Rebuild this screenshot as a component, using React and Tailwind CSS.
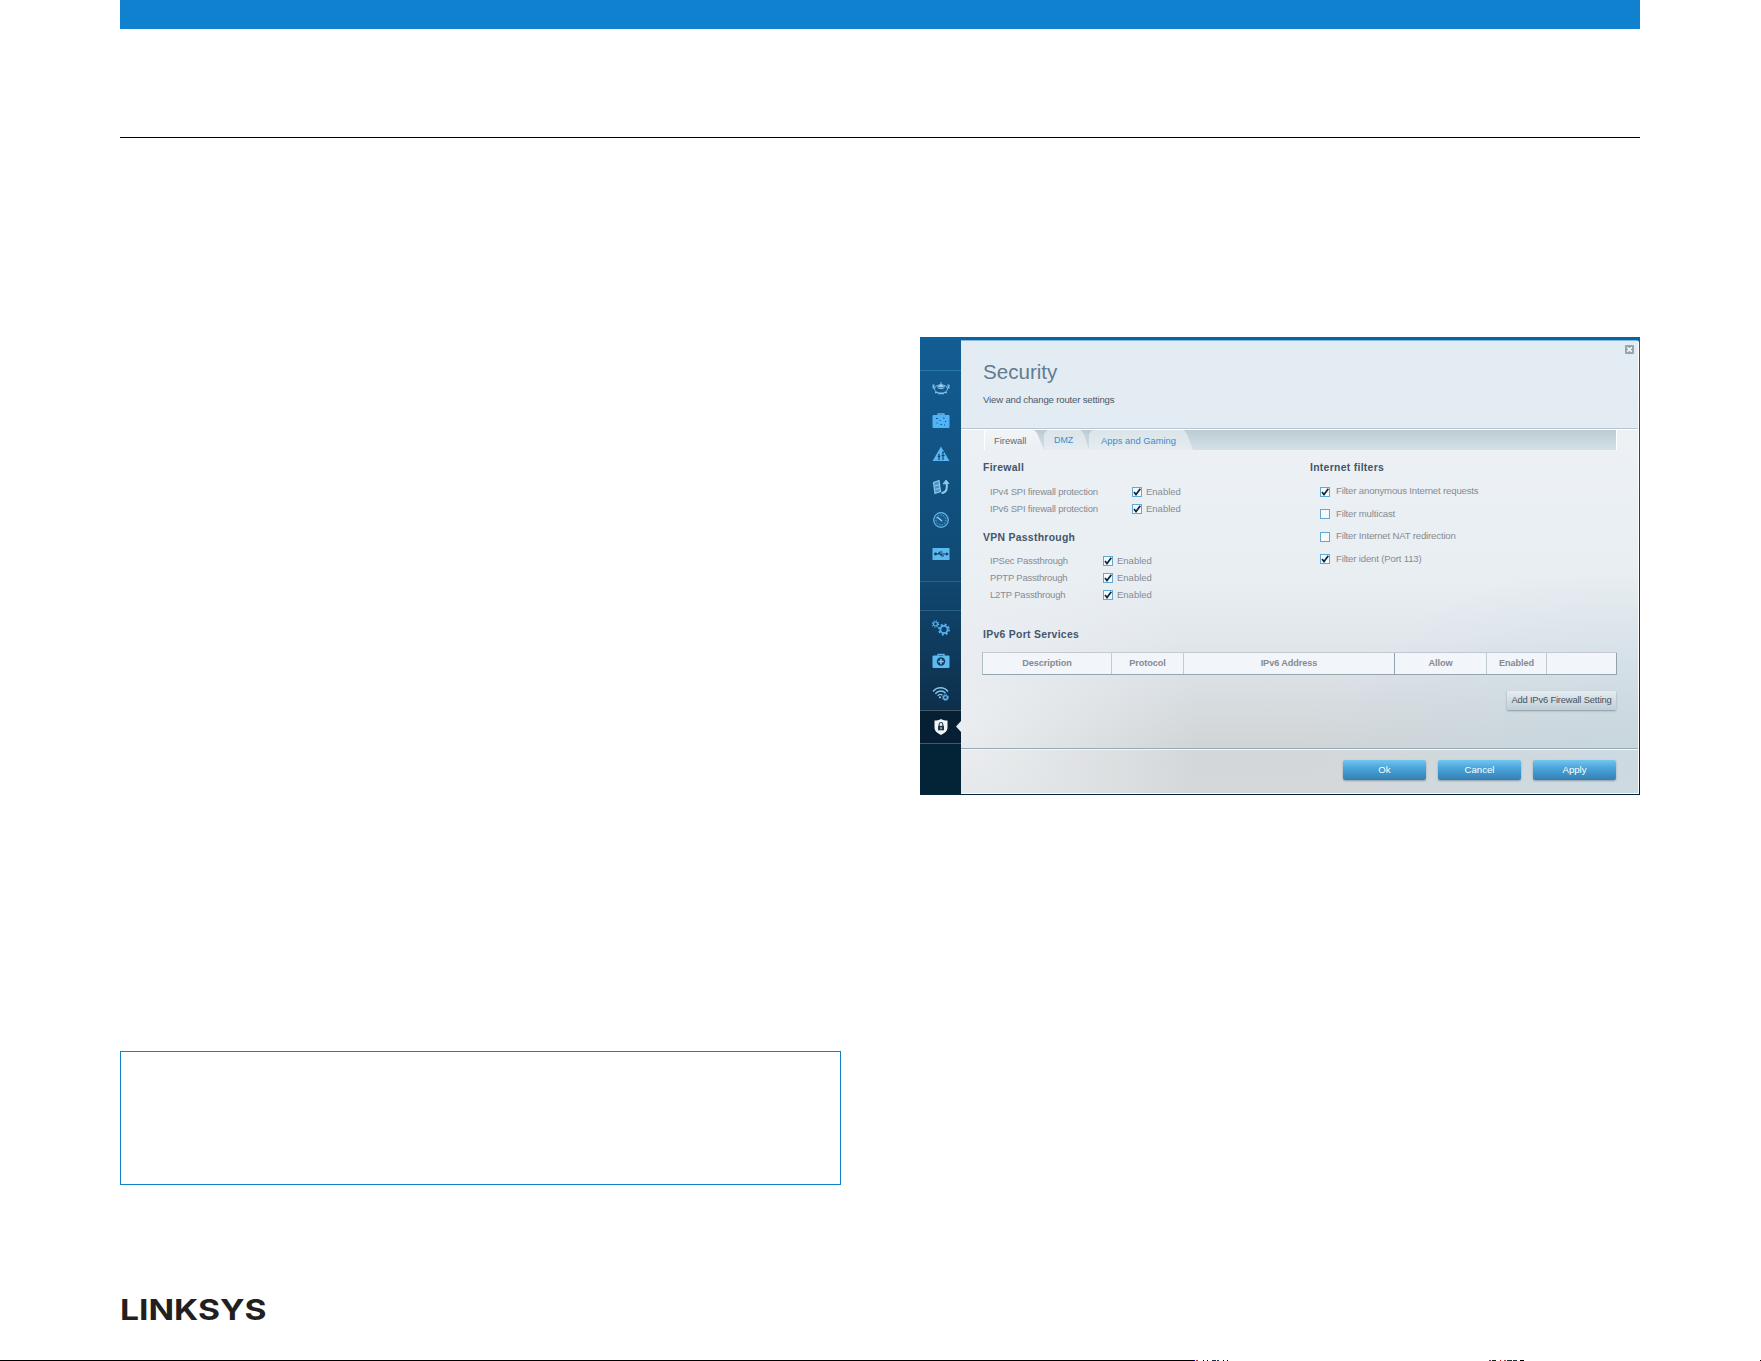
import React from 'react';
import clsx from 'clsx';

const icons = {
  devices: (
    <g fill="none" stroke="#7fbce6" strokeWidth="1">
      <ellipse cx="9" cy="10" rx="6.5" ry="4.2" />
      <path d="M5.500 8L9 5l3.500 3z" fill="#a9d8f5" />
      <path d="M6.500 9.500h5M9 3v2" />
      <path d="M1.500 5.500v4M16.500 5.500v4" strokeWidth="2" />
      <path d="M3 13.500h2.500M12.500 13.500H15M6 14.500h6" strokeWidth="1.600" />
    </g>
  ),
  guest: (
    <g>
      <path d="M6 4V2h6v2" fill="none" stroke="#5cb8f5" strokeWidth="1.300" />
      <rect x=".5" y="3" width="17" height="13" rx="1" fill="#4fb3f5" />
      <path d="M4 6.500h2M11 6h1.500M7.500 8.500h1M4.500 11h1M8.500 12.500h1.500M13 9.500h1M12 13h1" stroke="#12527f" strokeWidth="1.200" />
    </g>
  ),
  parental: (
    <g>
      <path d="M9 1.500L17.500 16H.5z" fill="#5ab6f1" />
      <path d="M7 10v5M5.800 11.500h2.500M11 8.500V15M9.500 10.500h3.200" stroke="#0e4a76" strokeWidth="1.200" />
      <circle cx="11" cy="7.500" r="1" fill="#0e4a76" />
      <circle cx="7" cy="9.500" r=".8" fill="#0e4a76" />
    </g>
  ),
  media: (
    <g fill="none" stroke="#8ec9ee" strokeWidth="1.200">
      <path d="M1.500 4.500l5.500-2 1.500 11L3 15.500z" fill="#4f93c3" />
      <path d="M3 8l4-1.300M3.500 11.500l4-1.300" />
      <path d="M9.500 15c5.500-.5 6-5 5-11" strokeWidth="2" />
      <path d="M11 6l3-4 3 3.500z" fill="#8ec9ee" strokeWidth=".8" />
    </g>
  ),
  speed: (
    <g fill="none" stroke="#65b3e5">
      <circle cx="9" cy="9" r="7.300" fill="#185d8e" strokeWidth="1.200" />
      <circle cx="9" cy="9" r="5" strokeDasharray="1.200 1.600" />
      <path d="M5 6l5 4" stroke="#9ed5f6" strokeWidth="1.200" />
    </g>
  ),
  usb: (
    <g>
      <rect x=".5" y="3" width="17" height="12" fill="#5cb9ef" />
      <path d="M2.500 9h13M6 9l2-2h2.500M8 9l2 2h2" stroke="#0d4165" strokeWidth="1.100" fill="none" />
      <path d="M14 7.200l3 1.800-3 1.800z" fill="#0d4165" />
      <circle cx="3.500" cy="9" r="1.400" fill="#0d4165" />
    </g>
  ),
  settings: (
    <g fill="none" stroke="#56b2ee">
      <circle cx="12" cy="10.500" r="3.600" strokeWidth="1.800" />
      <circle cx="12" cy="10.500" r="5.100" strokeWidth="1.700" strokeDasharray="2 2.005" />
      <circle cx="3.500" cy="5" r="2" strokeWidth="1.200" />
      <circle cx="3.500" cy="5" r="3.100" strokeWidth="1.200" strokeDasharray="1.217 1.217" />
    </g>
  ),
  trouble: (
    <g>
      <path d="M6 4V2.300h6V4" fill="none" stroke="#5ab6ee" strokeWidth="1.300" />
      <rect x=".5" y="3.500" width="17" height="12.500" rx="1" fill="#5fbaf0" />
      <circle cx="9" cy="9.500" r="4.200" fill="#123f60" />
      <path d="M9 6.800v5.400M6.300 9.500h5.400" stroke="#7cc8f4" strokeWidth="1.500" />
    </g>
  ),
  wireless: (
    <g fill="none" stroke="#86c2ea" strokeWidth="1.400">
      <path d="M1 6.500c4-5 11-5 15 0M3.300 8.700c3-3.500 7.500-3.500 10.300-.5M5.600 10.800c1.500-1.600 3.500-1.700 5-.6" />
      <circle cx="8" cy="12.300" r="1.100" fill="#86c2ea" stroke="none" />
      <circle cx="13.500" cy="12.500" r="1.900" stroke="#65b4e9" />
      <circle cx="13.500" cy="12.500" r="3" stroke="#65b4e9" strokeWidth="1" strokeDasharray="1.178 1.178" />
    </g>
  ),
  security: (
    <g>
      <path d="M9 1c2 1.200 4.200 1.500 6.500 1.500V9.500c0 3.500-3 5.800-6.500 7.500-3.500-1.700-6.500-4-6.500-7.500V2.500C4.800 2.500 7 2.200 9 1z" fill="#f1f5f8" />
      <rect x="6" y="7.800" width="6" height="4.500" fill="#213848" />
      <path d="M7.200 8V6.300a1.800 1.800 0 0 1 3.600 0V8" fill="none" stroke="#213848" strokeWidth="1.100" />
      <path d="M9 9.200v2" stroke="#f1f5f8" />
    </g>
  ),
};

const Icon = ({ name }) => (
  <svg className="h-[18px] w-[18px]" viewBox="0 0 18 18">{icons[name]}</svg>
);

const SideItem = ({ name }) => (
  <div className="flex h-[33.2px] items-center justify-center">
    <Icon name={name} />
  </div>
);

const Sidebar = () => (
  <div className="flex w-[41px] shrink-0 flex-col bg-linear-to-b from-[#125d93] via-[#104a74] via-50% to-[#0a2135]">
    <div className="h-[31px] shrink-0 border-b border-[#2a75a8]" />
    <div className="h-[210px] shrink-0">
      {['devices', 'guest', 'parental', 'media', 'speed', 'usb'].map((n) => (
        <SideItem key={n} name={n} />
      ))}
    </div>
    <div className="h-[30px] shrink-0 border-y border-[#2b5f85]" />
    <div className="h-[99px] shrink-0">
      {['settings', 'trouble', 'wireless'].map((n) => (
        <SideItem key={n} name={n} />
      ))}
    </div>
    <div className="relative flex h-[34px] shrink-0 items-center justify-center border-y border-[#40596b] bg-[#061f32]">
      <Icon name="security" />
      <span className="absolute right-0 top-[10px] h-[11px] w-[5px] bg-[#e8edf1] [clip-path:polygon(100%_0,0_50%,100%_100%)]" />
    </div>
    <div className="grow bg-[#032337]" />
  </div>
);

const Box = ({ checked }) => (
  <span className="flex h-[10px] w-[10px] shrink-0 border border-[#64a8d2] bg-[#f6fafc]">
    {checked && (
      <svg className="h-2 w-2" viewBox="0 0 8 8">
        <path d="M1 4l2 2.500L7.300.8" fill="none" stroke="#0b2941" strokeWidth="1.700" />
      </svg>
    )}
  </span>
);

const Heading = ({ children, className }) => (
  <h2 className={clsx('whitespace-nowrap text-[10.4px] leading-[14px] font-bold tracking-[0.3px] text-[#44566a]', className)}>
    {children}
  </h2>
);

const Setting = ({ label, labelWidth, height }) => (
  <div className={clsx('flex items-center pl-[7px] text-[9.5px] text-[#868c93]', height)}>
    <span className={clsx('tracking-[-0.2px]', labelWidth)}>{label}</span>
    <Box checked />
    <span className="ml-1">Enabled</span>
  </div>
);

const Filter = ({ label, checked }) => (
  <div className="flex h-[22.5px] items-center gap-[6px] whitespace-nowrap pl-[10px] text-[9.6px] tracking-[-0.17px] text-[#868c93]">
    <Box checked={checked} />
    <span>{label}</span>
  </div>
);

const ActionButton = ({ children }) => (
  <button className="h-5 w-[83px] rounded-[2px] bg-linear-to-b from-[#73c5ef] via-[#4aa5db] via-40% to-[#347fb4] text-[9.6px] text-white shadow-[0_1px_2px_#8b9ba6]">
    {children}
  </button>
);

const Tabs = () => (
  <div className="ml-[23px] flex h-[20px] w-[633px] border-r border-white bg-linear-to-b from-[#bccbd3] to-[#d5e0e7] text-[9.4px] text-[#3b8cca]">
    <div className="w-[60px] border-l border-white bg-linear-to-b from-[#f2f5f8] to-[#ebf0f4] pl-[9px] leading-[21px] text-[#5d6975] [clip-path:polygon(0_0,50px_0,53px_3px,60px_100%,0_100%)]">
      Firewall
    </div>
    <div className="w-[45px] bg-linear-to-b from-[#dae4e9] to-[#e6edf1] pl-[10px] text-[8.9px] leading-[21px] [clip-path:polygon(0_4px,3px_0,37px_0,40px_4px,45px_100%,0_100%)]">
      DMZ
    </div>
    <div className="w-[104px] whitespace-nowrap bg-linear-to-b from-[#dae4e9] to-[#e6edf1] pl-[12px] leading-[21px] [clip-path:polygon(0_4px,3px_0,95px_0,98px_4px,104px_100%,0_100%)]">
      Apps and Gaming
    </div>
  </div>
);

const columns = [
  { label: 'Description', width: 'w-[129px]' },
  { label: 'Protocol', width: 'w-[72px]' },
  { label: 'IPv6 Address', width: 'w-[211px]', dark: true },
  { label: 'Allow', width: 'w-[92px]' },
  { label: 'Enabled', width: 'w-[60px]' },
  { label: '', width: 'w-[70px]', dark: true },
];

const RouterWindow = () => (
  <section className="flex h-[458px] w-[720px] border-b border-[#04263d] bg-linear-to-b from-[#0863a5] to-[#04263d]">
    <div className="flex grow pt-[3px]">
      <Sidebar />
      <div className="mr-px flex grow flex-col rounded-tr-[3px] border-t border-r border-b border-t-[#86bddf] border-r-white border-b-white bg-[radial-gradient(ellipse_35%_55%_at_0%_85%,rgba(240,243,246,0.8),rgba(240,243,246,0)),radial-gradient(ellipse_50%_45%_at_100%_95%,rgba(192,216,227,0.6),rgba(192,216,227,0)),linear-gradient(to_bottom,#edf1f5_20%,#e8eef2_52%,#e2e7ed_66%,#d7dce0_80%,#cfd3d5_92%,#d0d4d6)]">
        <header className="relative h-[88px] shrink-0 border-b border-[#b9c6cf] bg-[#e3ebf3] pl-[22px] pt-[18px]">
          <h1 className="text-[20.6px] leading-[26px] text-[#637b8e]">Security</h1>
          <p className="mt-[9px] text-[9.6px] leading-[12px] tracking-[-0.18px] text-[#4f5964]">View and change router settings</p>
          <span className="absolute right-[4px] top-[4px] h-[9px] w-[9px] rounded-[1px] bg-[#93a5b2]">
            <svg className="h-[9px] w-[9px]" viewBox="0 0 9 9">
              <path d="M2.200 2.200l4.600 4.600M6.800 2.200L2.200 6.800" stroke="#fff" strokeWidth="1.500" />
            </svg>
          </span>
        </header>
        <div className="h-[320px] shrink-0 border-t border-b border-t-white border-b-[#9aaab4]">
          <Tabs />
          <div className="flex h-[175px] pl-[22px] pt-[11px]">
            <div className="w-[327px]">
              <Heading>Firewall</Heading>
              <div className="mt-[8.5px]">
                <Setting label="IPv4 SPI firewall protection" labelWidth="w-[142px]" height="h-[17px]" />
                <Setting label="IPv6 SPI firewall protection" labelWidth="w-[142px]" height="h-[17px]" />
              </div>
              <Heading className="mt-[13px]">VPN Passthrough</Heading>
              <div className="mt-[7.500px]">
                <Setting label="IPSec Passthrough" labelWidth="w-[113px]" height="h-[17.4px]" />
                <Setting label="PPTP Passthrough" labelWidth="w-[113px]" height="h-[17.4px]" />
                <Setting label="L2TP Passthrough" labelWidth="w-[113px]" height="h-[17.4px]" />
              </div>
            </div>
            <div>
              <Heading>Internet filters</Heading>
              <div className="mt-[5.4px]">
                <Filter label="Filter anonymous Internet requests" checked />
                <Filter label="Filter multicast" />
                <Filter label="Filter Internet NAT redirection" />
                <Filter label="Filter ident (Port 113)" checked />
              </div>
            </div>
          </div>
          <div className="pl-[21px] pr-[21px]">
            <Heading className="ml-px pt-[3px]">IPv6 Port Services</Heading>
            <div className="mt-[10px] flex h-[23px] w-[635px] border-y border-l border-t-[#c1cad1] border-b-[#94a5ae] border-l-[#b4c0c8] bg-[#f2f5fa] text-[9.200px] font-bold leading-[21px] tracking-[-0.1px] text-[#868b92]">
              {columns.map((c, i) => (
                <div
                  key={i}
                  className={clsx('border-r text-center', c.width, c.dark ? 'border-[#91a2ad]' : 'border-[#c1cbd2]')}
                >
                  {c.label}
                </div>
              ))}
            </div>
            <div className="mr-px flex justify-end pt-[16px]">
              <button className="h-[19px] w-[109px] whitespace-nowrap rounded-[1px] bg-linear-to-b from-[#e6edf1] to-[#bfced7] text-[9.400px] tracking-[-0.18px] text-[#46525e] shadow-[0_1px_2px_#8998a2]">
                Add IPv6 Firewall Setting
              </button>
            </div>
          </div>
        </div>
        <footer className="flex grow justify-end gap-[12px] border-t border-[#f3f6f7] bg-white/10 pr-[22px] pt-[10px]">
          <ActionButton>Ok</ActionButton>
          <ActionButton>Cancel</ActionButton>
          <ActionButton>Apply</ActionButton>
        </footer>
      </div>
    </div>
  </section>
);

// leftover printer marks along the page bottom: [offset, width, colour]
const marks = [
  ['ml-0', 'w-[1194px]', 'bg-black'],
  ['ml-0', 'w-px', 'bg-[#0000ff]'],
  ['ml-px', 'w-[2px]', 'bg-[#c33220]'],
  ['ml-[5px]', 'w-px', 'bg-black'],
  ['ml-[3px]', 'w-px', 'bg-black'],
  ['ml-[4px]', 'w-[4px]', 'bg-[#1b2f55]'],
  ['ml-px', 'w-[2px]', 'bg-[#143a6a]'],
  ['ml-[4px]', 'w-px', 'bg-black'],
  ['ml-[3px]', 'w-px', 'bg-black'],
  ['ml-[261px]', 'w-[2px]', 'bg-[#7b2f7b]'],
  ['ml-px', 'w-[4px]', 'bg-[#0b2b12]'],
  ['ml-[4px]', 'w-px', 'bg-[#ff0000]'],
  ['ml-[3px]', 'w-[2px]', 'bg-[#c34040]'],
  ['ml-px', 'w-[5px]', 'bg-[#123535]'],
  ['ml-px', 'w-[4px]', 'bg-[#222f3f]'],
  ['ml-[3px]', 'w-[4px]', 'bg-black'],
  ['ml-auto', 'w-px', 'bg-black'],
];

const App = () => (
  <div className="flex h-[1361px] w-[1761px] flex-col overflow-hidden bg-white font-['Liberation_Sans',Arial,sans-serif]">
    <div className="ml-[120px] h-[29px] w-[1520px] shrink-0 bg-[#1081cf]" />
    <div className="ml-[120px] mt-[108px] h-px w-[1520px] shrink-0 bg-black" />
    <main className="ml-[120px] flex h-[1047px] w-[1520px] shrink-0 justify-between">
      <div className="flex w-[721px] items-end">
        <div className="h-[134px] w-full border border-[#1081c8]" />
      </div>
      <div className="pt-[199px]">
        <RouterWindow />
      </div>
    </main>
    <div className="ml-[120px] mt-[104px] h-[44px]">
      <svg className="overflow-visible" width="150" height="44" viewBox="0 0 150 44">
        <text x="0" y="31" textLength="146.500" lengthAdjust="spacingAndGlyphs" fontFamily="Inter" fontWeight="700" fontSize="28.500" fill="#231f20">
          LINKSYS
        </text>
      </svg>
    </div>
    <div className="mt-auto flex h-px">
      {marks.map(([offset, width, color], i) => (
        <div key={i} className={clsx('shrink-0', offset, width, color)} />
      ))}
    </div>
  </div>
);

export default App;
